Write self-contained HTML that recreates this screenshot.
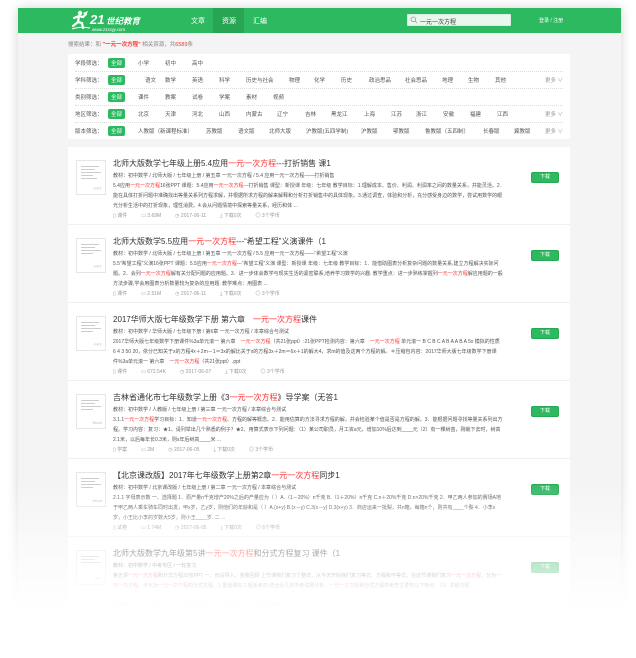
<!DOCTYPE html>
<html style="overflow:hidden;height:658px"><head><meta charset="utf-8"><style>
*{margin:0;padding:0;box-sizing:border-box}
body{width:636px;height:658px;background:#fff;position:relative;overflow:hidden;font-family:"Liberation Sans","Noto Sans CJK SC",sans-serif;color:#555}
.a{position:absolute;white-space:nowrap}
#frame{position:absolute;left:18px;top:8px;width:603px;height:640px;background:#f4f4f4;box-shadow:0 0 10px rgba(0,0,0,.18)}
#hd{position:absolute;left:18px;top:8px;width:603px;height:25px;background:#2cb960}
.f{font-size:5.5px;color:#555}
.red{color:#f33}
.badge{background:#2cb960;color:#fff;border-radius:2px;padding:1px 3px;font-size:5.5px}
.dots{position:absolute;left:75px;width:488px;border-top:1px dotted #ddd;height:0}
.item{position:absolute;left:68px;width:502px;height:78px;background:#fff;border-bottom:1px solid #f0f0f0}
.th{position:absolute;left:8px;top:13px;width:30px;height:35px;border:1px solid #e6e6e6;background:#fff}
.th i{position:absolute;left:4px;height:1px;background:#ccc}
.th b{position:absolute;right:3px;bottom:3px;font-size:4px;color:#bbb;font-weight:normal}
.ti{position:absolute;left:45px;top:11px;font-size:8px;color:#333;white-space:nowrap}
.me{position:absolute;left:45px;top:25px;font-size:5px;color:#555;white-space:nowrap}
.de{position:absolute;left:45px;top:34px;width:390px;font-size:5px;line-height:10px;color:#555;height:30px;overflow:hidden}
.in{position:absolute;left:45px;top:65px;font-size:5px;color:#999;white-space:nowrap;word-spacing:0}
.in span{margin-right:14px}
.bt{position:absolute;left:463px;top:25px;width:28px;height:11px;background:#2cb960;border:1px solid #25a852;border-radius:2px;color:#fff;font-size:5px;text-align:center;line-height:9px}
#fade{position:absolute;left:0;top:480px;width:636px;height:178px;background:linear-gradient(rgba(255,255,255,0) 0%,rgba(255,255,255,.6) 42%,rgba(255,255,255,.95) 68%,#fff 76%)}
</style></head><body>
<div id="frame"></div>
<div id="hd"></div>
<svg class="a" style="left:70px;top:9px" width="80" height="24" viewBox="0 0 80 24">
<circle cx="10" cy="4" r="2.2" fill="#fff"/>
<path d="M4 9 L9 7 L13 8 L16 5 M9 7 L8 13 L3 17 M8 13 L12 14 L13 19" stroke="#fff" stroke-width="2.2" fill="none" stroke-linecap="round"/>
<path d="M13 4 L18 2 L16 7 Z" fill="#fff"/>
<path d="M2 20 Q10 17 20 19" stroke="#fff" stroke-width="1" fill="none"/>
<text x="20" y="15" fill="#fff" font-size="13" font-weight="bold" font-style="italic" font-family="Liberation Sans">21</text>
<text x="36" y="15" fill="#fff" font-size="8.5" font-weight="bold" font-style="italic" font-family="Noto Sans CJK SC">世纪教育</text>
<text x="22" y="22" fill="#fff" font-size="4.5" font-style="italic" font-family="Liberation Sans">www.21cnjy.com</text>
</svg>
<div class="a" style="left:213px;top:8px;width:31px;height:25px;background:#27a553"></div>
<div class="a" style="left:191px;top:16px;font-size:7px;color:#fff">文章</div>
<div class="a" style="left:222px;top:16px;font-size:7px;color:#fff">资源</div>
<div class="a" style="left:253px;top:16px;font-size:7px;color:#fff">汇编</div>
<div class="a" style="left:407px;top:14px;width:104px;height:12px;background:#eaf7ee;border:1px solid #d8efdf;border-radius:1px"></div>
<svg class="a" style="left:410px;top:16px" width="8" height="8"><circle cx="3.3" cy="3.3" r="2.3" stroke="#999" fill="none" stroke-width=".8"/><path d="M5 5 L7 7" stroke="#999" stroke-width=".8"/></svg>
<div class="a" style="left:420px;top:16.5px;font-size:6px;color:#333">一元一次方程</div>
<div class="a" style="left:539px;top:17px;font-size:5px;color:#fff">登录 / 注册</div>

<div class="a f" style="left:68px;top:40px;color:#888">搜索结果：和 <span class="red" style="font-weight:bold">"一元一次方程"</span> 相关资源，共<span class="red">6589</span>条</div>

<div class="a" style="left:68px;top:54px;width:502px;height:85px;background:#fff;border-radius:2px"></div>
<div class="dots" style="top:71px"></div><div class="dots" style="top:88px"></div><div class="dots" style="top:105px"></div><div class="dots" style="top:122px"></div>
<div class="a f" style="left:75px;top:59px">学段筛选：</div><div class="a badge" style="left:108px;top:58px">全部</div>
<div class="a f" style="left:138px;top:59px">小学</div><div class="a f" style="left:165px;top:59px">初中</div><div class="a f" style="left:192px;top:59px">高中</div>
<div class="a f" style="left:75px;top:76px">学科筛选：</div><div class="a badge" style="left:108px;top:75px">全部</div>
<div class="a f" style="left:145px;top:76px">语文</div><div class="a f" style="left:165px;top:76px">数学</div><div class="a f" style="left:192px;top:76px">英语</div><div class="a f" style="left:219px;top:76px">科学</div><div class="a f" style="left:246px;top:76px">历史与社会</div><div class="a f" style="left:289px;top:76px">物理</div><div class="a f" style="left:314px;top:76px">化学</div><div class="a f" style="left:341px;top:76px">历史</div><div class="a f" style="left:369px;top:76px">政治思品</div><div class="a f" style="left:405px;top:76px">社会思品</div><div class="a f" style="left:442px;top:76px">地理</div><div class="a f" style="left:468px;top:76px">生物</div><div class="a f" style="left:495px;top:76px">其他</div><div class="a f" style="left:545px;top:76px;color:#999">更多 ∨</div>
<div class="a f" style="left:75px;top:93px">类别筛选：</div><div class="a badge" style="left:108px;top:92px">全部</div>
<div class="a f" style="left:138px;top:93px">课件</div><div class="a f" style="left:165px;top:93px">教案</div><div class="a f" style="left:192px;top:93px">试卷</div><div class="a f" style="left:219px;top:93px">学案</div><div class="a f" style="left:246px;top:93px">素材</div><div class="a f" style="left:273px;top:93px">视频</div>
<div class="a f" style="left:75px;top:110px">地区筛选：</div><div class="a badge" style="left:108px;top:109px">全部</div>
<div class="a f" style="left:138px;top:110px">北京</div><div class="a f" style="left:165px;top:110px">天津</div><div class="a f" style="left:192px;top:110px">河北</div><div class="a f" style="left:219px;top:110px">山西</div><div class="a f" style="left:246px;top:110px">内蒙古</div><div class="a f" style="left:277px;top:110px">辽宁</div><div class="a f" style="left:305px;top:110px">吉林</div><div class="a f" style="left:331px;top:110px">黑龙江</div><div class="a f" style="left:364px;top:110px">上海</div><div class="a f" style="left:391px;top:110px">江苏</div><div class="a f" style="left:416px;top:110px">浙江</div><div class="a f" style="left:443px;top:110px">安徽</div><div class="a f" style="left:470px;top:110px">福建</div><div class="a f" style="left:497px;top:110px">江西</div><div class="a f" style="left:545px;top:110px;color:#999">更多 ∨</div>
<div class="a f" style="left:75px;top:127px">版本筛选：</div><div class="a badge" style="left:108px;top:126px">全部</div>
<div class="a f" style="left:138px;top:127px">人教版（新课程标准）</div><div class="a f" style="left:206px;top:127px">苏教版</div><div class="a f" style="left:238px;top:127px">语文版</div><div class="a f" style="left:269px;top:127px">北师大版</div><div class="a f" style="left:306px;top:127px">沪教版(五四学制)</div><div class="a f" style="left:361px;top:127px">沪教版</div><div class="a f" style="left:393px;top:127px">鄂教版</div><div class="a f" style="left:425px;top:127px">鲁教版（五四制）</div><div class="a f" style="left:483px;top:127px">长春版</div><div class="a f" style="left:514px;top:127px">冀教版</div><div class="a f" style="left:545px;top:127px;color:#999">更多 ∨</div>

<div class="item" style="top:147px">
<div class="th"><i style="top:5px;width:18px"></i><i style="top:8px;width:14px"></i><i style="top:11px;width:20px"></i><i style="top:14px;width:12px"></i><i style="top:17px;width:16px"></i><b>PPT</b></div>
<div class="ti">北师大版数学七年级上册5.4应用<span class="red">一元一次方程</span>---打折销售 课1</div>
<div class="me">教材：初中数学 / 北师大版 / 七年级上册 / 第五章 一元一次方程 / 5.4 应用一元一次方程——打折销售</div>
<div class="de">5.4应用<span class="red">一元一次方程</span>16张PPT 课题：5.4应用<span class="red">一元一次方程</span>---打折销售 课型：新授课 年级：七年级 教学目标：1.理解成本、售价、利润、利润率之间的数量关系，并能灵活。2.能在具体打折问题中准确找出等量关系列方程求解，并根据所求方程的解来解释和分析打折销售中的具体现象。3.通过调查，体验和分析，充分感受身边的数学，尝试用数学的眼光分析生活中的打折现象，理性消费。4.会从问题情境中探索等量关系，经历和体 ...</div>
<div class="in"><span>▯ 课件</span><span>▭ 3.69M</span><span>◷ 2017-06-11</span><span>⤓ 下载0次</span><span>◎ 3个学币</span></div>
<div class="bt">下载</div></div>

<div class="item" style="top:225px">
<div class="th"><i style="top:5px;width:18px"></i><i style="top:8px;width:14px"></i><i style="top:11px;width:20px"></i><i style="top:14px;width:12px"></i><b>PPT</b></div>
<div class="ti">北师大版数学5.5应用<span class="red">一元一次方程</span>---“希望工程”义演课件（1</div>
<div class="me">教材：初中数学 / 北师大版 / 七年级上册 / 第五章 一元一次方程 / 5.5 应用一元一次方程——“希望工程”义演</div>
<div class="de">5.5“希望工程”义演16张PPT 课题：5.5应用<span class="red">一元一次方程</span>---“希望工程”义演 课型：新授课 年级：七年级 教学目标：1．能借助图表分析复杂问题的数量关系,建立方程解决实际问题。2．会列<span class="red">一元一次方程</span>解有关分配问题的应用题。3．进一步体会数学与现实生活的紧密联系,培养学习数学的兴趣. 教学重点：进一步熟练掌握列<span class="red">一元一次方程</span>解应用题的一般方法步骤,学会用图表分析数量较为复杂的应用题. 教学难点：用图表 ...</div>
<div class="in"><span>▯ 课件</span><span>▭ 2.51M</span><span>◷ 2017-06-11</span><span>⤓ 下载0次</span><span>◎ 3个学币</span></div>
<div class="bt">下载</div></div>

<div class="item" style="top:303px">
<div class="th"><i style="top:5px;width:18px"></i><i style="top:8px;width:14px"></i><i style="top:11px;width:20px"></i><i style="top:14px;width:12px"></i><b>PPT</b></div>
<div class="ti">2017华师大版七年级数学下册 第六章　<span class="red">一元一次方程</span>课件</div>
<div class="me">教材：初中数学 / 华师大版 / 七年级下册 / 第6章 一元一次方程 / 本章综合与测试</div>
<div class="de">2017华师大版七年级数学下册课件%3a单元滚一 第六章　<span class="red">一元一次方程</span>（共21张ppt）:21张PPT检测内容：第六章　<span class="red">一元一次方程</span> 单元滚一 B C B C A B A A B A 5x 模拟的性质 6 4 3 50 20，依分已知关于x的方程4x＋2m－1＝3x的解比关于x的方程3x＋2m＝6x＋1的解大4，求m的值及这两个方程的解。＊压缩包内容：2017华师大版七年级数学下册课件%3a单元滚一 第六章　<span class="red">一元一次方程</span>（共21张ppt）.ppt</div>
<div class="in"><span>▯ 课件</span><span>▭ 672.54K</span><span>◷ 2017-06-07</span><span>⤓ 下载0次</span><span>◎ 3个学币</span></div>
<div class="bt">下载</div></div>

<div class="item" style="top:381px">
<div class="th"><i style="top:5px;width:18px"></i><i style="top:8px;width:14px"></i><i style="top:11px;width:20px"></i><i style="top:14px;width:12px"></i><b>Word</b></div>
<div class="ti">吉林省通化市七年级数学上册《3<span class="red">一元一次方程</span>》导学案（无答1</div>
<div class="me">教材：初中数学 / 人教版 / 七年级上册 / 第三章 一元一次方程 / 本章综合与测试</div>
<div class="de">3.1.1<span class="red">一元一次方程</span>学习目标：1．知道<span class="red">一元一次方程</span>、方程的解等概念。2．能用估算的方法寻求方程的解，并会检验某个值是否是方程的解。3．能根据问题寻找等量关系列出方程。学习内容：复习：★1、请列举出几个熟悉的例子？★2、用算式表示下列问题：（1）某公司职员，月工资a元，增加10%后达到____元（2）有一棵树苗，刚栽下去时，树高2.1米，以后每年长0.3米，则x年后树高____米 ...</div>
<div class="in"><span>▯ 学案</span><span>▭ 2M</span><span>◷ 2017-06-05</span><span>⤓ 下载0次</span><span>◎ 3个学币</span></div>
<div class="bt">下载</div></div>

<div class="item" style="top:459px">
<div class="th"><i style="top:5px;width:18px"></i><i style="top:8px;width:14px"></i><i style="top:11px;width:20px"></i><i style="top:14px;width:12px"></i><b>Word</b></div>
<div class="ti">【北京课改版】2017年七年级数学上册第2章<span class="red">一元一次方程</span>同步1</div>
<div class="me">教材：初中数学 / 北京课改版 / 七年级上册 / 第二章 一元一次方程 / 本章综合与测试</div>
<div class="de">2.1.1 字母表示数 一、选择题 1．原产量n千克增产20%之后的产量应为（ ）A.（1－20%）n千克 B.（1＋20%）n千克 C.n＋20%千克 D.n×20%千克 2．甲乙两人参加的赛场A地于甲乙两人乘车骑车同时出发，甲x岁，乙y岁，则他们的年龄和是（ ）A.(x+y) B.(x－y) C.3(x－y) D.3(x+y) 3．商店运来一批梨，共n箱，每箱n个，则共有____个梨 4．小李x岁，小王比小李的岁数大5岁，则小王____岁. 二 ...</div>
<div class="in"><span>▯ 试卷</span><span>▭ 1.74M</span><span>◷ 2017-06-05</span><span>⤓ 下载0次</span><span>◎ 6个学币</span></div>
<div class="bt">下载</div></div>

<div class="item" style="top:537px;height:110px;border-bottom:none">
<div class="th"><i style="top:5px;width:18px"></i><i style="top:8px;width:14px"></i><i style="top:11px;width:20px"></i><b>PPT</b></div>
<div class="ti">北师大版数学九年级第5讲<span class="red">一元一次方程</span>和分式方程复习 课件（1</div>
<div class="me">教材：初中数学 / 中考专区 / 一轮复习</div>
<div class="de">第五讲<span class="red">一元一次方程</span>和分式方程33张PPT 一、创设导入，金陵回顾 上节课我们复习了整式，从今天开始我们复习等式、方程和不等式，在这节课我们复习<span class="red">一元一次方程</span>，分为<span class="red">一元一次方程</span>、可化为<span class="red">一元一次方程</span>的分式方程。1.重温课标 2.题系考向 结合近几年中考试题分析，<span class="red">一元一次方程</span>和分式方程的考查主要有以下特点：（1）求解方程...</div>
<div class="in"><span>▯ 课件</span><span>▭ 1.21M</span><span>◷ 2017-05-23</span><span>⤓ 下载0次</span><span>◎ 3个学币</span></div>
<div class="bt">下载</div></div>

<div id="fade"></div>
</body></html>
